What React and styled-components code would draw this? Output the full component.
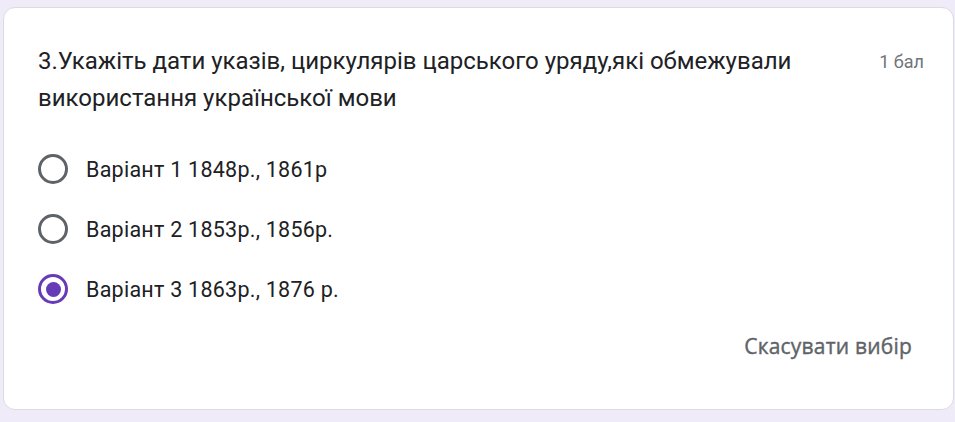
import React from "react";
import styled, { createGlobalStyle } from "styled-components";

const GlobalStyle = createGlobalStyle`
  body {
    margin: 0;
    background: #f0ebf8;
    font-family: Roboto, "Liberation Sans", sans-serif;
  }
`;

const Page = styled.div`
  padding: 7px 2px 12px 3px;
`;

const Card = styled.div`
  background: #fff;
  border: 1px solid #dadce0;
  border-radius: 12px;
  padding: 35px 29px 35px 34px;
  box-sizing: border-box;
  width: 951px;
  height: 403px;
  display: flex;
  flex-direction: column;
`;

const Header = styled.div`
  display: flex;
  justify-content: space-between;
  align-items: flex-start;
  gap: 40px;
`;

const Title = styled.div`
  font-size: 24px;
  line-height: 37px;
  color: #202124;
  max-width: 800px;
`;

const Points = styled.div`
  font-size: 18px;
  line-height: 37px;
  color: #70757a;
  white-space: nowrap;
`;

const Options = styled.div`
  display: flex;
  flex-direction: column;
  margin-top: 22px;
`;

const Option = styled.label`
  display: flex;
  align-items: center;
  height: 60px;
  gap: 18px;
  cursor: pointer;
`;

const Radio = styled.span`
  box-sizing: border-box;
  width: 30px;
  height: 30px;
  border-radius: 50%;
  border: 3px solid ${(p) => (p.checked ? "#673ab7" : "#5f6368")};
  display: flex;
  align-items: center;
  justify-content: center;
  flex-shrink: 0;
  &::after {
    content: "";
    width: 15px;
    height: 15px;
    border-radius: 50%;
    background: #673ab7;
    display: ${(p) => (p.checked ? "block" : "none")};
  }
`;

const OptionText = styled.span`
  font-size: 21.5px;
  color: #202124;
  letter-spacing: 0.25px;
`;

const Footer = styled.div`
  display: flex;
  justify-content: flex-end;
  height: 54px;
  align-items: center;
`;

const ClearButton = styled.button`
  border: none;
  background: none;
  font-family: "Open Sans", "Liberation Sans", sans-serif;
  font-size: 21px;
  font-weight: 500;
  letter-spacing: 0.2px;
  color: #5f6368;
  -webkit-text-stroke: 0.4px #5f6368;
  padding: 0 12px;
  height: 54px;
  cursor: pointer;
`;

const options = [
  { label: "Варіант 1 1848р., 1861р", checked: false },
  { label: "Варіант 2 1853р., 1856р.", checked: false },
  { label: "Варіант 3 1863р., 1876 р.", checked: true },
];

export default function App() {
  return (
    <>
      <GlobalStyle />
      <Page>
        <Card>
          <Header>
            <Title>
              3.Укажіть дати указів, циркулярів царського уряду,які обмежували
              використання української мови
            </Title>
            <Points>1 бал</Points>
          </Header>
          <Options>
            {options.map((o) => (
              <Option key={o.label}>
                <Radio checked={o.checked} />
                <OptionText>{o.label}</OptionText>
              </Option>
            ))}
          </Options>
          <Footer>
            <ClearButton>Скасувати вибір</ClearButton>
          </Footer>
        </Card>
      </Page>
    </>
  );
}
